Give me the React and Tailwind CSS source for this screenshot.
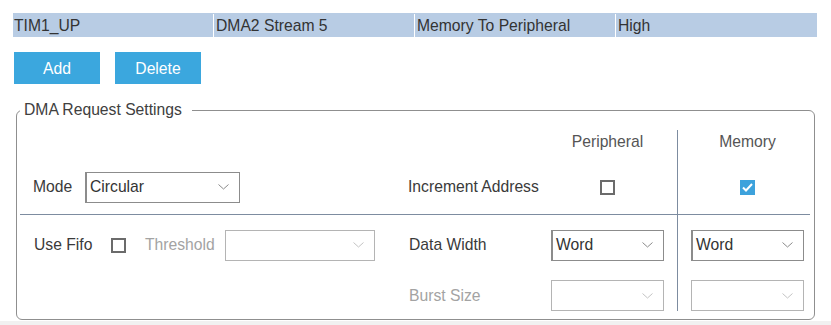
import React from 'react';

const font = { fontFamily: '"Liberation Sans", Arial, sans-serif' };

const Chevron = ({ disabled }) => (
  <svg width="11" height="6" viewBox="0 0 11 6" fill="none" stroke={disabled ? '#c4c4c4' : '#8a8a8a'} strokeWidth="1">
    <path d="M0.5 0.5 L5.5 5 L10.5 0.5" />
  </svg>
);

const Select = ({ value, width, disabled }) => (
  <div
    className={`flex h-[31px] items-center justify-between border pl-[3px] pr-[10px] ${width} ${
      disabled ? 'border-[#b4b4b4]' : 'border-[#8c8c8c] border-l-2'
    }`}
  >
    <span className="text-[#333]">{value}</span>
    <Chevron disabled={disabled} />
  </div>
);

const Checkbox = ({ checked }) =>
  checked ? (
    <div className="flex h-[15px] w-[15px] items-center justify-center bg-[#3da2dc]">
      <svg width="11" height="9" viewBox="0 0 11 9" fill="none" stroke="white" strokeWidth="2">
        <path d="M1 4.5 L4 7.5 L10 1" />
      </svg>
    </div>
  ) : (
    <div className="h-[15px] w-[15px] border-2 border-[#6b6b6b]" />
  );

export default function App() {
  const cells = ['TIM1_UP', 'DMA2 Stream 5', 'Memory To Peripheral', 'High'];

  return (
    <div className="flex h-[325px] w-[831px] flex-col bg-white text-[15.7px] text-[#3a3a3a]" style={font}>
      <div className="px-[13px] pt-[13px]">
        <div className="flex h-[24px] w-[804px] bg-[#b8cce4] pt-[1px] text-[#333]">
          {cells.map((c, i) => (
            <div
              key={c}
              className={`flex items-center ${i === 0 ? 'w-[200px] pl-[1px]' : 'border-l border-white pl-[2px]'} ${
                i === 1 || i === 2 ? 'w-[201px]' : ''
              } ${i === 3 ? 'flex-1' : ''}`}
            >
              {c}
            </div>
          ))}
        </div>
      </div>

      <div className="mt-[15px] flex gap-[15px] pl-[14px]">
        <button className="h-[32px] w-[86px] bg-[#3ba7de] pt-[2px] text-white">Add</button>
        <button className="h-[32px] w-[86px] bg-[#3ba7de] pt-[2px] text-white">Delete</button>
      </div>

      <fieldset className="mx-[16px] mt-[17px] flex rounded-[6px] border border-[#8f8f8f] pb-[8px] pl-[3px] pr-[4px] pt-[11px]">
        <legend className="ml-0 pl-[4px] pr-[10px] leading-[18px] text-[#404040]">DMA Request Settings</legend>

        <div className="flex w-[657px] flex-col">
          <div className="flex h-[30px] items-start">
            <div className="w-[531px]" />
            <div className="w-[113px] text-center text-[#555]">Peripheral</div>
          </div>
          <div className="flex h-[55px] items-center border-b border-[#7d8ca0]">
            <div className="flex w-[388px] items-center pl-[13px]">
              <span className="w-[52px]">Mode</span>
              <Select value="Circular" width="w-[155px]" />
            </div>
            <div className="w-[143px]">Increment Address</div>
            <div className="flex w-[113px] justify-center">
              <Checkbox />
            </div>
          </div>
          <div className="flex h-[60px] items-center">
            <div className="flex w-[388px] items-center pl-[14px]">
              <span className="w-[77px]">Use Fifo</span>
              <Checkbox />
              <span className="ml-[19px] w-[80px] text-[#a3a3a3]">Threshold</span>
              <Select value="" width="w-[150px]" disabled />
            </div>
            <div className="w-[143px] pl-[1px]">Data Width</div>
            <Select value="Word" width="w-[113px]" />
          </div>
          <div className="flex h-[36px] items-start pt-[5px]">
            <div className="w-[388px]" />
            <div className="flex h-[31px] w-[143px] items-center pl-[1px] text-[#a3a3a3]">Burst Size</div>
            <Select value="" width="w-[113px]" disabled />
          </div>
        </div>

        <div className="flex flex-1 flex-col border-l border-[#7d8ca0]">
          <div className="flex h-[30px] items-start pl-[13px]">
            <div className="w-[113px] text-center text-[#555]">Memory</div>
          </div>
          <div className="flex h-[55px] items-center border-b border-[#7d8ca0] pl-[13px]">
            <div className="flex w-[113px] justify-center">
              <Checkbox checked />
            </div>
          </div>
          <div className="flex h-[60px] items-center pl-[13px]">
            <Select value="Word" width="w-[113px]" />
          </div>
          <div className="flex h-[36px] items-start pl-[13px] pt-[5px]">
            <Select value="" width="w-[113px]" disabled />
          </div>
        </div>
      </fieldset>

      <div className="mt-[1px] flex-1 bg-[#f1f1f1]" />
    </div>
  );
}
